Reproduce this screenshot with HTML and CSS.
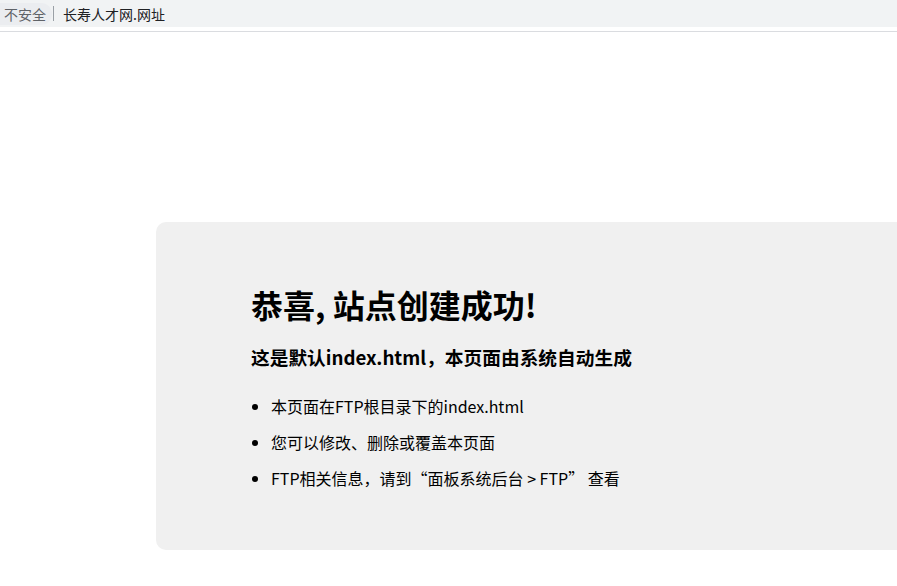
FILE: index.html
```html
<!doctype html>
<html lang="zh-CN">
<head>
<meta charset="utf-8">
<title>恭喜，站点创建成功！</title>
<link rel="stylesheet" href="styles.css">
</head>
<body>
<header class="chrome">
  <div class="omnibox">
    <span class="chip">不安全</span>
    <span class="sep"></span>
    <span class="url">长寿人才网.网址</span>
  </div>
</header>
<main class="page">
  <div class="container">
    <h1>恭喜, 站点创建成功!</h1>
    <h3>这是默认index.html，本页面由系统自动生成</h3>
    <ul>
      <li>本页面在FTP根目录下的index.html</li>
      <li>您可以修改、删除或覆盖本页面</li>
      <li>FTP相关信息，请到“面板系统后台 &gt; FTP” 查看</li>
    </ul>
  </div>
</main>
</body>
</html>
```

FILE: styles.css
```css
html, body {
  margin: 0;
  padding: 0;
  background: #fff;
  overflow: hidden;
}
body {
  width: 897px;
  height: 586px;
  font-family: "Noto Sans CJK SC", "Noto Sans", sans-serif;
  color: #000;
}
.chrome {
  height: 31px;
  border-bottom: 1px solid #dadce0;
  background: #fff;
}
.omnibox {
  height: 27px;
  background: #f1f3f4;
  display: flex;
  align-items: center;
  font-size: 14px;
}
.chip {
  height: 22px;
  line-height: 22px;
  padding: 0 6px 0 4px;
  color: #5f6368;
  background: #ebedf0;
  border-radius: 0 11px 11px 0;
}
.sep {
  width: 1px;
  height: 15px;
  background: #9aa0a6;
  margin: 0 9px 0 1px;
}
.url {
  color: #202124;
}
.page {
  padding-top: 190px;
}
.container {
  margin-left: 156px;
  width: 900px;
  background: #f0f0f0;
  border-radius: 10px;
  padding: 38px 0 38px 95px;
}
h1 {
  margin: 24px 0 0;
  font-size: 32px;
  line-height: 40px;
  font-weight: 700;
}
h3 {
  margin: 20px 0 0;
  font-size: 18.72px;
  line-height: 26px;
  font-weight: 700;
}
ul {
  margin: 18px 0 16px;
  padding-left: 20px;
}
li {
  font-size: 16px;
  line-height: 36px;
}
```
